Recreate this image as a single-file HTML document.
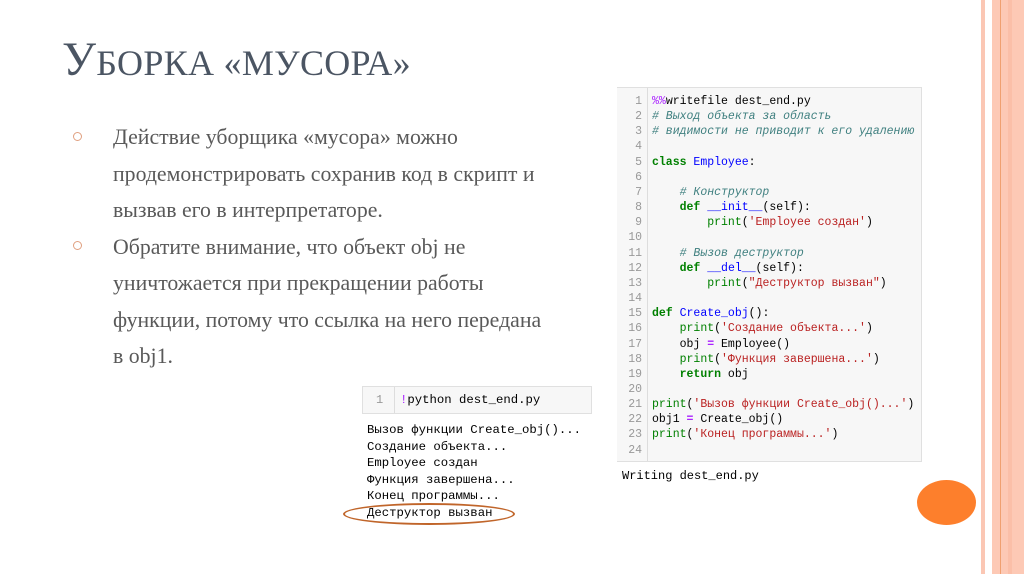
<!DOCTYPE html>
<html><head><meta charset="utf-8"><style>
body{margin:0;width:1024px;height:574px;background:#fff;position:relative;overflow:hidden;font-family:"Liberation Serif",serif}
.abs{position:absolute}
.title{left:62px;top:32px;color:#4b5563;white-space:nowrap;letter-spacing:0.3px}
.title .b{font-size:48px}.title .s{font-size:36px}
.txt{left:113px;color:#595959;font-size:21.8px;white-space:nowrap}
.bul{left:73px;width:7px;height:7px;border:1px solid #e0a080;border-radius:50%}
.code{left:617px;top:87px;width:305px;height:375px;background:#f7f7f7;border:1px solid #e0e0e0;box-sizing:border-box}
.gut{left:617px;top:88px;width:30px;height:373px;border-right:1px solid #ddd;background:#f7f7f7}
pre{margin:0;font-family:"Liberation Mono","DejaVu Sans Mono",monospace;font-size:11.5px;line-height:15.15px}
.ln{color:#999;text-align:right}
.k{color:#008000;font-weight:bold}.c{color:#408080;font-style:italic}.s1{color:#ba2121}.n{color:#0000ff}.m{color:#aa22ff}.o{color:#aa22ff;font-weight:bold}
</style></head><body>
<div class="abs" style="left:981px;top:0;width:4px;height:574px;background:#fbc7b4"></div>
<div class="abs" style="left:992px;top:0;width:32px;height:574px;background:#fdc9b5"></div>
<div class="abs" style="left:1000px;top:0;width:1px;height:574px;background:#f0a070"></div>
<div class="abs" style="left:1008px;top:0;width:4px;height:574px;background:#fbbfa8"></div>
<div class="abs title"><span class="b">У</span><span class="s">БОРКА «МУСОРА»</span></div>
<div class="abs bul" style="top:132px"></div>
<div class="abs bul" style="top:241px"></div>
<div class="abs txt" style="top:119px;line-height:36.5px">Действие уборщика «мусора» можно<br>продемонстрировать сохранив код в скрипт и<br>вызвав его в интерпретаторе.<br>Обратите внимание, что объект obj не<br>уничтожается при прекращении работы<br>функции, потому что ссылка на него передана<br>в obj1.</div>
<div class="abs code"></div>
<div class="abs gut"></div>
<pre class="abs ln" style="left:617px;top:94px;width:25px">1
2
3
4
5
6
7
8
9
10
11
12
13
14
15
16
17
18
19
20
21
22
23
24</pre>
<pre class="abs" style="left:652px;top:94px"><span class="m">%%</span>writefile dest_end.py
<span class="c"># Выход объекта за область</span>
<span class="c"># видимости не приводит к его удалению</span>

<span class="k">class</span> <span class="n">Employee</span>:

    <span class="c"># Конструктор</span>
    <span class="k">def</span> <span class="n">__init__</span>(self):
        <span class="k" style="font-weight:normal">print</span>(<span class="s1">'Employee создан'</span>)

    <span class="c"># Вызов деструктор</span>
    <span class="k">def</span> <span class="n">__del__</span>(self):
        <span class="k" style="font-weight:normal">print</span>(<span class="s1">"Деструктор вызван"</span>)

<span class="k">def</span> <span class="n">Create_obj</span>():
    <span class="k" style="font-weight:normal">print</span>(<span class="s1">'Создание объекта...'</span>)
    obj <span class="o">=</span> Employee()
    <span class="k" style="font-weight:normal">print</span>(<span class="s1">'Функция завершена...'</span>)
    <span class="k">return</span> obj

<span class="k" style="font-weight:normal">print</span>(<span class="s1">'Вызов функции Create_obj()...'</span>)
obj1 <span class="o">=</span> Create_obj()
<span class="k" style="font-weight:normal">print</span>(<span class="s1">'Конец программы...'</span>)
</pre>
<pre class="abs" style="left:622px;top:469px;font-size:12px">Writing dest_end.py</pre>
<div class="abs" style="left:362px;top:386px;width:230px;height:28px;background:#f7f7f7;border:1px solid #e0e0e0;box-sizing:border-box"></div>
<div class="abs" style="left:362px;top:387px;width:32px;height:26px;border-right:1px solid #ddd"></div>
<pre class="abs" style="left:376px;top:393px;color:#999;font-size:12px">1</pre>
<pre class="abs" style="left:400px;top:393px;font-size:12.3px"><span class="m">!</span>python dest_end.py</pre>
<pre class="abs" style="left:367px;top:422px;line-height:16.6px;font-size:12.3px">Вызов функции Create_obj()...
Создание объекта...
Employee создан
Функция завершена...
Конец программы...
Деструктор вызван</pre>
<div class="abs" style="left:343px;top:503px;width:168px;height:18px;border:2px solid #c0652a;border-radius:50%"></div>
<div class="abs" style="left:917px;top:480px;width:59px;height:45px;background:#fd7f2c;border-radius:50%"></div>
</body></html>
